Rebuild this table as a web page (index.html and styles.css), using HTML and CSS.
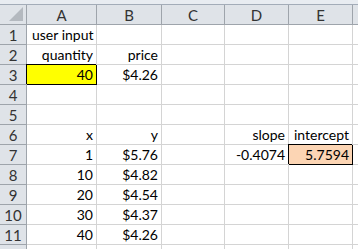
FILE: index.html
```html
<!DOCTYPE html>
<html lang="en">

<head>
    <meta charset="UTF-8">
    <meta name="viewport" content="width=device-width, initial-scale=1.0">
    <title>Sheet</title>
    <link rel="stylesheet" href="styles.css">
</head>

<body>
    <div class="top-strip"></div>
    <div class="sheet">
        <!-- header row -->
        <div class="hd corner">
            <svg width="14" height="14" viewBox="0 0 14 14"><polygon points="14,0 14,14 0,14" fill="#b4b9bf"/></svg>
        </div>
        <div class="hd">A</div>
        <div class="hd">B</div>
        <div class="hd">C</div>
        <div class="hd">D</div>
        <div class="hd">E</div>
        <div class="hd"></div>

        <div class="rh">1</div>
        <div class="c left">user input</div><div class="c"></div><div class="c"></div><div class="c"></div><div class="c"></div><div class="c"></div>

        <div class="rh">2</div>
        <div class="c">quantity</div><div class="c">price</div><div class="c"></div><div class="c"></div><div class="c"></div><div class="c"></div>

        <div class="rh">3</div>
        <div class="c yellow">40</div><div class="c">$4.26</div><div class="c"></div><div class="c"></div><div class="c"></div><div class="c"></div>

        <div class="rh">4</div>
        <div class="c"></div><div class="c"></div><div class="c"></div><div class="c"></div><div class="c"></div><div class="c"></div>

        <div class="rh">5</div>
        <div class="c"></div><div class="c"></div><div class="c"></div><div class="c"></div><div class="c"></div><div class="c"></div>

        <div class="rh">6</div>
        <div class="c">x</div><div class="c">y</div><div class="c"></div><div class="c">slope</div><div class="c">intercept</div><div class="c"></div>

        <div class="rh">7</div>
        <div class="c">1</div><div class="c">$5.76</div><div class="c"></div><div class="c">-0.4074</div><div class="c orange">5.7594</div><div class="c"></div>

        <div class="rh">8</div>
        <div class="c">10</div><div class="c">$4.82</div><div class="c"></div><div class="c"></div><div class="c"></div><div class="c"></div>

        <div class="rh">9</div>
        <div class="c">20</div><div class="c">$4.54</div><div class="c"></div><div class="c"></div><div class="c"></div><div class="c"></div>

        <div class="rh">10</div>
        <div class="c">30</div><div class="c">$4.37</div><div class="c"></div><div class="c"></div><div class="c"></div><div class="c"></div>

        <div class="rh">11</div>
        <div class="c">40</div><div class="c">$4.26</div><div class="c"></div><div class="c"></div><div class="c"></div><div class="c"></div>

        <div class="rh"></div>
        <div class="c"></div><div class="c"></div><div class="c"></div><div class="c"></div><div class="c"></div><div class="c"></div>
    </div>
</body>

</html>
```

FILE: styles.css
```css
body {
    margin: 0;
    width: 358px;
    height: 249px;
    overflow: hidden;
    background: #fff;
    font-family: Lato, "Liberation Sans", sans-serif;
    font-size: 14px;
    color: #000;
}

.top-strip {
    height: 5px;
    box-sizing: border-box;
    background: #e8ecf1;
    border-bottom: 1px solid #a3acb8;
}

.sheet {
    display: grid;
    grid-template-columns: 27px 70px 65px 63px 64px 64px 20px;
    grid-auto-rows: 20px;
}

.hd,
.rh {
    box-sizing: border-box;
    background: #dfe3e8;
    border-right: 1px solid #9ea4ab;
    border-bottom: 1px solid #9ea4ab;
    color: #333;
    display: flex;
    align-items: center;
    justify-content: center;
    padding-top: 1px;
    font-size: 15px;
}

.corner {
    justify-content: flex-end;
    align-items: flex-end;
    padding: 0 3px 3px 0;
}

.corner svg {
    display: block;
}

.c {
    box-sizing: border-box;
    border-right: 1px solid #d4d4d4;
    border-bottom: 1px solid #d4d4d4;
    display: flex;
    align-items: flex-end;
    justify-content: flex-end;
    padding: 0 3px 1px 2px;
    line-height: 17px;
    white-space: nowrap;
}

.c.left {
    justify-content: flex-start;
    padding-left: 5px;
}

.yellow,
.orange {
    position: relative;
    border-right-color: #000;
    border-bottom-color: #000;
    box-shadow: -1px -1px 0 #000;
}

.yellow {
    background: #ffff00;
}

.orange {
    background: #fcd5b4;
}
```
